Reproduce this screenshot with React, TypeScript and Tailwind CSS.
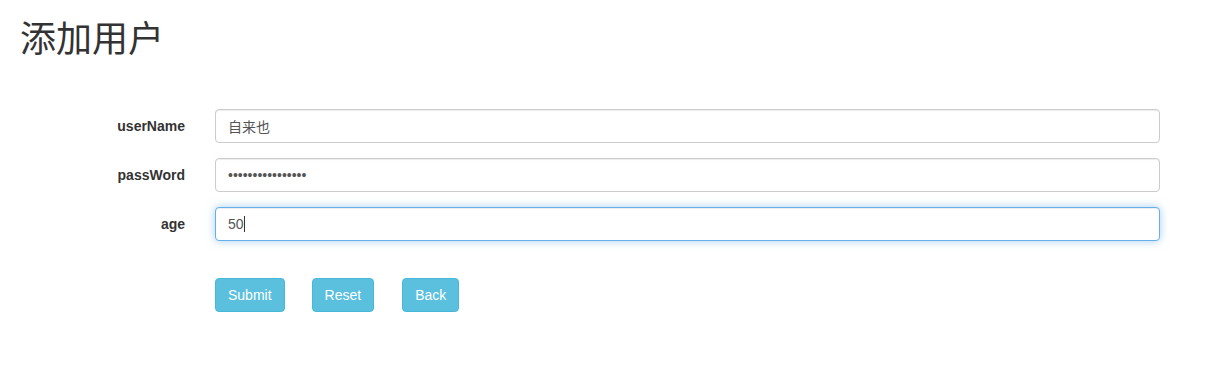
const font = "font-['Liberation_Sans','Noto_Sans_CJK_SC',sans-serif]";

function Field({ label, children }: { label: string; children: React.ReactNode }) {
    return (
        <div className="flex items-center mb-[15px]">
            <label className="w-[185px] pt-[2px] text-right font-bold text-[14px] text-[#333]">{label}</label>
            <div className="ml-[30px] w-[945px]">{children}</div>
        </div>
    );
}

const inputCls = "block w-full h-[34px] px-[12px] pt-px rounded-[4px] border border-[#ccc] text-[14px] text-[#555] bg-white shadow-[inset_0_1px_1px_rgba(0,0,0,0.075)] outline-none";
const btnCls = "h-[34px] px-[12px] pt-px rounded-[4px] border border-[#46b8da] bg-[#5bc0de] text-white text-[14px]";

export default function App() {
    return (
        <div className={`${font} min-h-[373px] bg-white text-[#333] text-[14px]`}>
            <h1 className="pl-[20px] pt-[20px] text-[36px] leading-[1.1] font-normal text-[#333] font-['Liberation_Sans','Noto_Sans_CJK_SC',sans-serif]">
                添加用户
            </h1>
            <form className="mt-[49px]">
                <Field label="userName">
                    <input className={inputCls} readOnly value="自来也" />
                </Field>
                <Field label="passWord">
                    <input className={inputCls} type="password" readOnly value="1234567890123456" />
                </Field>
                <Field label="age">
                    <div className="flex items-center w-full h-[34px] px-[12px] pt-px rounded-[4px] border border-[#66afe9] text-[14px] text-[#555] bg-white shadow-[inset_0_1px_1px_rgba(0,0,0,0.075),0_0_8px_rgba(102,175,233,0.6)]">
                        <span>50</span>
                        <span className="inline-block w-px h-[16px] bg-[#333]"></span>
                    </div>
                </Field>
                <div className="flex ml-[215px] pt-[22px] gap-[27px]">
                    <button type="button" className={btnCls}>Submit</button>
                    <button type="button" className={btnCls}>Reset</button>
                    <button type="button" className={`${btnCls} ml-px`}>Back</button>
                </div>
            </form>
        </div>
    );
}
